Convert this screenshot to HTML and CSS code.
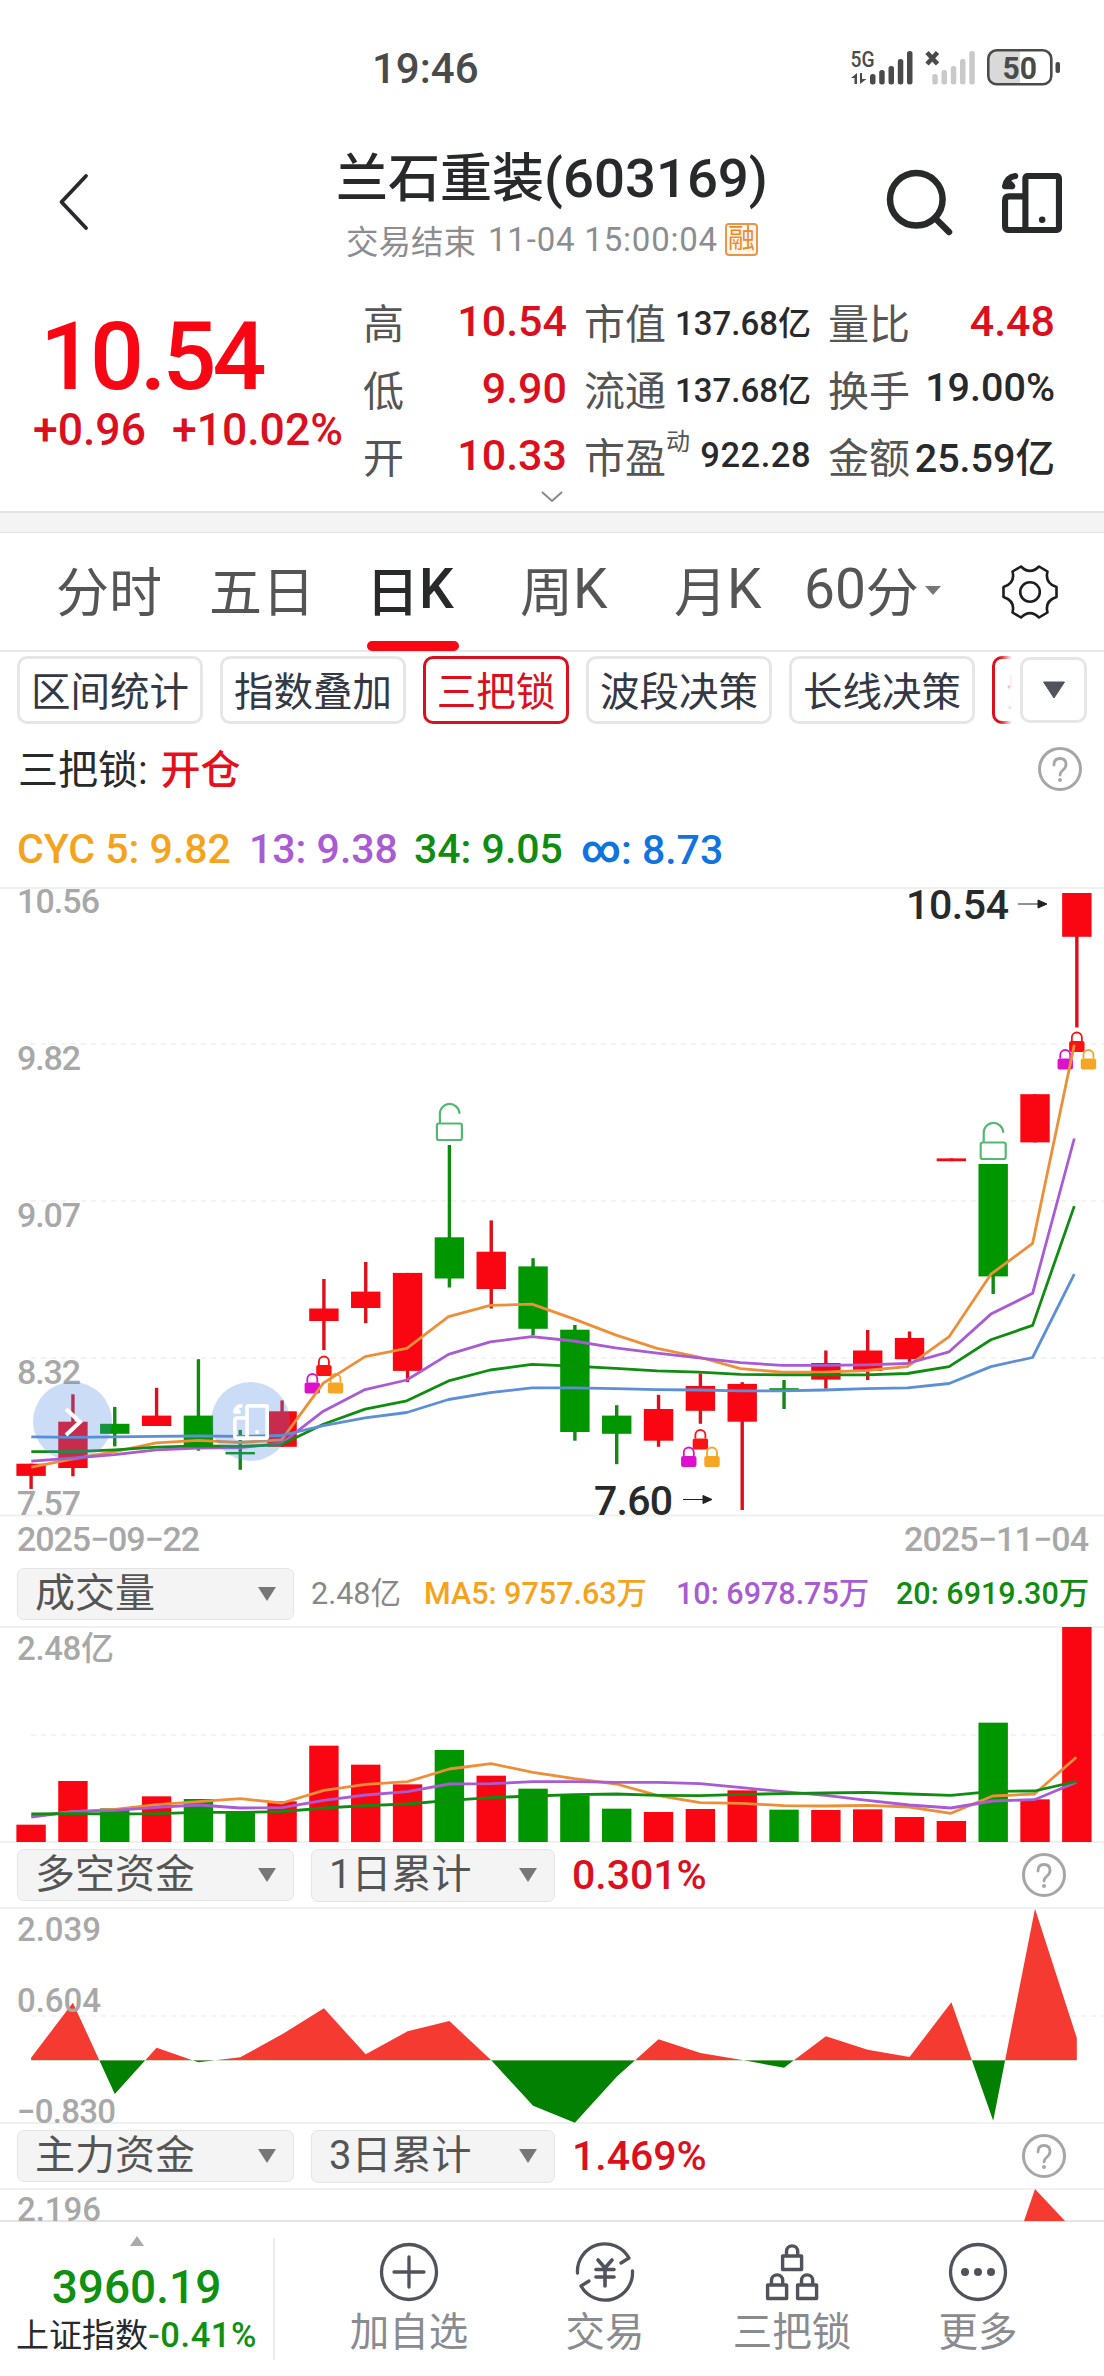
FILE: index.html
```html
<!DOCTYPE html>
<html lang="zh-CN">
<head>
<meta charset="utf-8">
<title>兰石重装(603169)</title>
<link rel="stylesheet" href="styles.css">
</head>
<body>
<svg width="0" height="0" class="defs">
  <defs>
    <g id="phone" fill="none" stroke="currentColor" stroke-width="6" stroke-linejoin="round" stroke-linecap="round">
      <rect x="23" y="3" width="33" height="53" rx="2"/>
      <path d="M22 23H7q-4 0-4 4v25q0 4 4 4h16"/>
      <circle cx="39.500" cy="46" r="3.200" fill="currentColor" stroke="none"/>
      <path d="M3 13q2-9 10-10M3 13h7M4 10q4-1 6 3" stroke-width="6"/>
    </g>
    <g id="help" fill="none" stroke="#a6a6a6" stroke-width="3">
      <circle cx="22" cy="22" r="20.500"/>
      <path d="M16 18q0-6.500 6-6.500t6 6q0 3-3 5.500t-3 5" stroke-width="2.800" stroke-linecap="round"/>
      <circle cx="22" cy="33" r="2" fill="#a6a6a6" stroke="none"/>
    </g>
    <g id="lock">
      <path d="M-5 10V6.500a5 5 0 0 1 10 0V10" fill="none" stroke="currentColor" stroke-width="1.800"/>
      <rect x="-7.700" y="10" width="15.400" height="11" rx="2" fill="currentColor"/>
    </g>
    <g id="locks">
      <use href="#lock" color="#fb1212"/>
      <use href="#lock" x="-11.600" y="17.500" color="#dd10cc"/>
      <use href="#lock" x="11.600" y="17.500" color="#f5a623"/>
    </g>
    <g id="unlock" fill="none" stroke="#53b873" stroke-width="2.200" stroke-linecap="round">
      <path d="M-9.500 19V10.500a9.700 9.700 0 0 1 19.500-1.500"/>
      <rect x="-12.500" y="19.500" width="25" height="16.500" rx="2"/>
    </g>
    <g id="footlock" fill="none" stroke="currentColor" stroke-width="3.400" stroke-linejoin="round">
      <rect x="1.600" y="12" width="19" height="13.500"/>
      <path d="M5.500 12V7.500a5.600 5.600 0 0 1 11.200 0V12"/>
    </g>
  </defs>
</svg>

<div class="status">
  <span class="clock">19:46</span>
  <svg width="220" height="44" viewBox="845 46 220 44" fill="#4a4a4a">
    <text x="850.500" y="66.500" font-size="22" textLength="24" lengthAdjust="spacingAndGlyphs" font-weight="500">5G</text>
    <path d="M857 84V73l-6 5h3.500v6zM860 73v11l6.500-5H862v-6z"/>
    <rect x="870" y="74" width="5.500" height="10.500" rx="2.500"/><rect x="879.200" y="70" width="5.500" height="14.500" rx="2.500"/><rect x="888.500" y="66" width="5.500" height="18.500" rx="2.500"/><rect x="897.800" y="59" width="5.500" height="25.500" rx="2.500"/><rect x="907" y="51" width="5.500" height="33.500" rx="2.500"/>
    <path d="M927 52.500l10.500 11.500m0-11.500L927 64" stroke="#4a4a4a" stroke-width="4.500"/>
    <g fill="#c9c9c9"><rect x="932.300" y="74" width="5.500" height="10.500" rx="2.500"/><rect x="941.500" y="70" width="5.500" height="14.500" rx="2.500"/><rect x="950.800" y="66" width="5.500" height="18.500" rx="2.500"/><rect x="960" y="59" width="5.500" height="25.500" rx="2.500"/><rect x="969.300" y="51" width="5.500" height="33.500" rx="2.500"/></g>
    <path d="M996 50h24v34h-24q-7 0-7-7V57q0-7 7-7z" fill="#d9d9d9"/>
    <rect x="988.300" y="50.300" width="63" height="34" rx="8.500" fill="none" stroke="#4a4a4a" stroke-width="2.600"/>
    <rect x="1055.500" y="62" width="4.500" height="11" rx="2"/>
    <text x="1002.500" y="79" font-size="32" font-weight="700" textLength="34.500" lengthAdjust="spacingAndGlyphs">50</text>
  </svg>
</div>

<header class="header">
  <svg class="back" width="32" height="60" viewBox="57 172 32 60"><path d="M86 176L61.500 202L86 228" fill="none" stroke="#28292b" stroke-width="3.800" stroke-linecap="round" stroke-linejoin="round"/></svg>
  <div class="heading">
    <h1>兰石重装<span class="num">(603169)</span></h1>
    <p>交易结束 <span class="num">11-04 15:00:04</span><b class="margin">融</b></p>
  </div>
  <svg class="search" width="68" height="68" viewBox="885 167 68 68" fill="none" stroke="#28292b" stroke-width="6.500"><circle cx="916.300" cy="199.300" r="26.300"/><path d="M935 218l14 14" stroke-linecap="round"/></svg>
  <svg class="phone" width="60" height="60" viewBox="0 0 59 59"><use href="#phone"/></svg>
</header>

<section class="quote">
  <div class="price">
    <strong>10.54</strong>
    <p><span>+0.96</span><span>+10.02%</span></p>
  </div>
  <dl class="c1"><div><dt>高</dt><dd class="up">10.54</dd></div><div><dt>低</dt><dd class="up">9.90</dd></div><div><dt>开</dt><dd class="up">10.33</dd></div></dl>
  <dl class="c2"><div><dt>市值</dt><dd>137.68<i>亿</i></dd></div><div><dt>流通</dt><dd>137.68<i>亿</i></dd></div><div><dt>市盈<sup>动</sup></dt><dd class="pe">922.28</dd></div></dl>
  <dl class="c3"><div><dt>量比</dt><dd class="up">4.48</dd></div><div><dt>换手</dt><dd>19.00%</dd></div><div><dt>金额</dt><dd>25.59<i>亿</i></dd></div></dl>
  <svg class="more" width="24" height="14" viewBox="0 0 24 14"><path d="M2 2l10 9L22 2" fill="none" stroke="#888" stroke-width="2"/></svg>
</section>

<nav class="tabs">
  <a class="t1">分时</a><a class="t2">五日</a><a class="t3 on">日<span class="num">K</span></a><a class="t4">周<span class="num">K</span></a><a class="t5">月<span class="num">K</span></a><a class="t6"><span class="num">60</span>分<svg width="16" height="9" viewBox="0 0 16 9"><path d="M0 0h16L8 9z" fill="#777"/></svg></a>
  <svg class="gear" width="58" height="56" viewBox="-29 -28 58 56" fill="none" stroke="#1c1d1f" stroke-width="2.600" stroke-linejoin="round"><path d="M-9-25.500Q0-16.500 9-25.500L17.500-20.500Q14.500-9 26.500-5V5Q14.500 9 17.500 20.500L9 25.500Q0 16.500-9 25.500L-17.500 20.500Q-14.500 9-26.500 5V-5Q-14.500-9-17.500-20.500Z"/><circle r="9.800"/></svg>
</nav>

<div class="chips">
  <span>区间统计</span><span>指数叠加</span><span class="on">三把锁</span><span>波段决策</span><span>长线决策</span>
  <div class="cut"><span class="on">紫</span></div>
  <button class="drop"><svg width="24" height="18" viewBox="0 0 24 18"><path d="M1.500 1h21L12 17z" fill="#50525c" stroke="#50525c" stroke-linejoin="round"/></svg></button>
</div>

<div class="signal"><span>三把锁: <em>开仓</em></span><svg width="44" height="44"><use href="#help"/></svg></div>
<div class="cyc"><span class="orange">CYC 5: 9.82</span><span class="purple">13: 9.38</span><span class="green">34: 9.05</span><span class="blue"><b>∞</b>: 8.73</span></div>

<div class="kline">
  <svg id="kline" width="1104" height="676" viewBox="0 886 1104 676"></svg>
  <button class="float expand"><svg width="20" height="34" viewBox="0 0 20 34"><path d="M3 4l14 13L3 30" fill="none" stroke="#fff" stroke-width="4"/></svg></button>
  <button class="float device"><svg width="36" height="36" viewBox="0 0 59 59"><use href="#phone"/></svg></button>
</div>

<div class="row volrow">
  <span class="select wide">成交量<svg width="18" height="14"><path d="M0 0h18L9 14z" fill="#777"/></svg></span>
  <span class="ma m0">2.48<i>亿</i></span><span class="ma m1 orange">MA5: 9757.63<i>万</i></span><span class="ma m2 purple">10: 6978.75<i>万</i></span><span class="ma m3 green">20: 6919.30<i>万</i></span>
</div>
<svg id="volume" width="1104" height="219" viewBox="0 1626 1104 219"></svg>

<div class="row fund">
  <span class="select wide">多空资金<svg width="18" height="14"><path d="M0 0h18L9 14z" fill="#777"/></svg></span>
  <span class="select"><span><span class="num">1</span>日累计</span><svg width="18" height="14"><path d="M0 0h18L9 14z" fill="#777"/></svg></span>
  <b>0.301%</b><svg class="q" width="44" height="44"><use href="#help"/></svg>
</div>
<svg id="flow" width="1104" height="219" viewBox="0 1907 1104 219"></svg>

<div class="row fund">
  <span class="select wide">主力资金<svg width="18" height="14"><path d="M0 0h18L9 14z" fill="#777"/></svg></span>
  <span class="select"><span><span class="num">3</span>日累计</span><svg width="18" height="14"><path d="M0 0h18L9 14z" fill="#777"/></svg></span>
  <b>1.469%</b><svg class="q" width="44" height="44"><use href="#help"/></svg>
</div>
<svg class="main" width="1104" height="32" viewBox="0 2188 1104 32">
  <path d="M0 2189H1104" stroke="#f0f0f0" stroke-width="2"/>
  <path d="M1035 2189L1065 2221H1024z" fill="#f53a32"/>
  <text x="17" y="2221" font-size="33" fill="#a8a8a8" textLength="84">2.196</text>
</svg>

<footer class="footer">
  <div class="index">
    <svg width="14" height="10"><path d="M7 0l7 10H0z" fill="#aaa"/></svg>
    <strong>3960.19</strong>
    <p>上证指数<span>-0.41%</span></p>
  </div>
  <div class="item i1"><svg width="60" height="60" viewBox="-30 -30 60 60" fill="none" stroke="currentColor" stroke-width="3.300" stroke-linecap="round"><circle r="27.500"/><path d="M-15 0h30M0-15v30"/></svg><span>加自选</span></div>
  <div class="item i2"><svg width="60" height="60" viewBox="-30 -30 60 60" fill="none" stroke="currentColor" stroke-width="3.300" stroke-linecap="round" stroke-linejoin="round"><path d="M-27.500 1A27.500 27.500 0 0 1 24-14l-8 5M27.500-1A27.500 27.500 0 0 1-24 14l8-5"/><path d="M-7-12L0-4l7-8M0-3v17M-9-2.500h18M-9 5h18" stroke-width="3.600"/></svg><span>交易</span></div>
  <div class="item i3"><svg width="60" height="60" viewBox="-30 -30 60 60"><use href="#footlock" x="-11" y="-28"/><use href="#footlock" x="-26" y="1"/><use href="#footlock" x="4" y="1"/></svg><span>三把锁</span></div>
  <div class="item i4"><svg width="60" height="60" viewBox="-30 -30 60 60" fill="none" stroke="currentColor" stroke-width="3.300"><circle r="27.500"/><g fill="currentColor" stroke="none"><circle cx="-13" r="4"/><circle r="4"/><circle cx="13" r="4"/></g></svg><span>更多</span></div>
</footer>
<script src="chart.js"></script>
</body>
</html>
```
FILE: styles.css
```css
* { box-sizing: border-box; }
body { margin: 0; width: 1104px; height: 2376px; overflow: hidden; background: #fff; color: #28292b; font-family: Roboto, "Noto Sans CJK SC", sans-serif; font-weight: 500; }
h1, p, dl, dd, dt { margin: 0; font-weight: 500; }
i, em { font-style: normal; }
b { font-weight: 500; }
svg { display: block; flex: none; overflow: visible; }
svg text { font-family: Roboto, "Noto Sans CJK SC", sans-serif; }
button { padding: 0; border: 0; background: none; }
.defs { position: absolute; }
.orange { color: #f5a31c; }
.purple { color: #a95bd3; }
.green { color: #108c10; }
.blue { color: #0f74e0; }

.status { display: flex; justify-content: space-between; align-items: center; height: 136px; padding: 0 39px 0 372px; }
.clock { font-size: 42px; color: #4a4a4a; }

.header { display: flex; height: 138px; align-items: flex-start; padding-left: 57px; }
.back { margin-top: 36px; }
.heading { width: 794px; padding: 7px 0 0 132px; text-align: center; margin-right: 2px; }
.heading h1 { font-size: 52px; line-height: 70px; white-space: nowrap; }
h1 .num { font-size: 54.500px; }
.heading p { display: flex; justify-content: center; align-items: center; height: 48px; gap: 12px; font-size: 32.500px; font-weight: 400; color: #8c8d90; }
.heading p .num { font-size: 33px; letter-spacing: .8px; }
.margin { width: 33px; height: 33px; margin-left: -5px; border: 2px solid #e8964a; border-radius: 4px; color: #ef8a2a; background: #fff8ec; font-size: 27px; line-height: 28px; font-weight: 400; }
.search { margin-top: 31px; }
.phone { margin: 37px 0 0 49px; }

.quote { position: relative; display: flex; height: 258px; padding-top: 13px; border-bottom: 19px solid #f4f4f4; box-shadow: inset 0 -2px #e2e2e2; }
.price { width: 363px; padding: 18px 0 0 36px; color: #f90614; }
.price strong { display: block; font-size: 95px; line-height: 104px; font-weight: 500; letter-spacing: -4px; padding-left: 4px; }
.price p { display: flex; gap: 26px; margin-top: -5px; line-height: 52px; font-size: 44.500px; color: #dc0f1e; white-space: nowrap; margin-left: -3px; }
.quote dl > div { display: flex; justify-content: space-between; align-items: center; height: 67px; white-space: nowrap; }
.quote dt { font-size: 41px; font-weight: 400; color: #555; }
.quote dd { font-size: 39.500px; }
.quote dd i { font-size: 1em; }
.quote .up { color: #dc0f1e; font-size: 43px; }
.c1 { width: 204px; }
.c2 { width: 227px; margin-left: 17px; }
.quote .c2 dd { font-size: 33px; }
.quote .c2 dd.pe { font-size: 34.500px; letter-spacing: .5px; }
.c2 dt { display: flex; }
.quote sup { font-size: 24px; line-height: 30px; margin-top: 2px; }
.c3 { width: 227px; margin-left: 17px; }
.more { position: absolute; left: 540px; top: 216px; }

.tabs { display: flex; align-items: center; height: 120px; padding-left: 56px; border-top: 1px solid #e2e2e2; border-bottom: 2px solid #e8e8e8; font-size: 53px; font-weight: 400; color: #555; white-space: nowrap; }
.tabs .num { font-size: 55px; }
.tabs a { position: relative; display: flex; align-items: center; height: 119px; padding-bottom: 6px; }
.t1, .t2 { width: 153px; }
.t3 { width: 158px; padding-left: 4px; }
.t4 { width: 154px; }
.t5 { width: 130px; }
.t6 { width: 197px; }
.t6 svg { margin: 4px 0 0 6px; }
.tabs .on { color: #28292b; font-weight: 500; }
.tabs .on::after { content: ""; position: absolute; left: 5px; bottom: 0; width: 92px; height: 10px; border-radius: 5px; background: #fa0714; }

.chips { display: flex; gap: 17px; height: 72px; padding: 4px 17px 0; font-size: 39.500px; color: #343844; }
.chips span { display: flex; flex: none; align-items: center; justify-content: center; width: 186px; height: 68px; padding-bottom: 3px; border: 3px solid #e6e6e6; border-radius: 10px; white-space: nowrap; font-weight: 400; }
.chips .on { width: 146px; border-color: #d9111e; color: #dc0f1e; }
.cut { width: 21px; overflow: hidden; -webkit-mask: linear-gradient(90deg, #000 40%, transparent); }
.cut .on { width: 146px; justify-content: flex-start; padding-left: 11px; }
.drop { display: flex; align-items: center; justify-content: center; flex: none; width: 67px; height: 66px; margin: 1px 0 0 -9px; border: 3px solid #e6e6e6; border-radius: 10px; }

.signal { display: flex; justify-content: space-between; align-items: center; height: 90px; padding: 0 22px 0 18px; font-size: 40px; font-weight: 400; white-space: pre; }
.signal span { padding-bottom: 5px; }
.signal em { color: #e60f1c; margin-left: 3px; font-weight: 500; }
.cyc { display: flex; height: 72px; line-height: 71px; padding-left: 17px; font-size: 41px; white-space: nowrap; }
.cyc span:nth-child(1) { width: 232px; }
.cyc span:nth-child(2) { width: 165px; }
.cyc span:nth-child(3) { width: 167px; }
.cyc b { font-size: 38px; font-weight: 700; vertical-align: 2px; }

.kline { position: relative; height: 676px; }
.float { position: absolute; top: 496px; display: flex; align-items: center; justify-content: center; width: 79px; height: 79px; border-radius: 50%; background: rgba(76, 138, 224, .29); color: #fff; }
.expand { left: 33px; }
.device { left: 211px; }

.row { display: flex; align-items: center; height: 64px; padding-left: 17px; white-space: nowrap; }
.select { display: flex; align-items: center; justify-content: space-between; width: 244px; height: 53px; padding: 0 17px; border: 1px solid #e4e4e4; border-radius: 7px; background: #f4f4f4; font-size: 40px; line-height: 52px; font-weight: 400; color: #555; }
.select.wide { width: 277px; height: 52px; margin-right: 17px; }
.ma { font-size: 30.500px; line-height: 62px; }
.m0 { width: 113px; color: #888; font-weight: 400; }
.m1 { width: 252px; }
.m2 { width: 220px; }
.fund { height: 62px; padding-bottom: 2px; }
.fund b { width: 450px; margin-left: 17px; font-size: 41px; color: #dc0f1e; }

.footer { display: flex; height: 156px; border-top: 2px solid #e4e4e4; background: #fff; color: #50525c; }
.index { display: flex; flex-direction: column; align-items: center; width: 275px; height: 122px; margin-top: 16px; border-right: 2px solid #eaeaea; white-space: nowrap; color: #28292b; }
.index strong { font-weight: 500; font-size: 46px; line-height: 54px; margin-top: 14px; color: #109010; }
.index svg { margin-top: -2px; }
.index p { font-size: 33px; line-height: 36px; margin-top: 3px; font-weight: 400; }
.index p span { font-size: 34.500px; letter-spacing: .6px; color: #109010; font-weight: 500; }
.item { display: flex; flex-direction: column; align-items: center; width: 196px; padding-top: 20px; }
.item span { margin-top: 3px; font-size: 39.500px; line-height: 56px; font-weight: 400; color: #8a8b90; }
.i1 { width: 200px; margin-left: 34px; }
.i2 { width: 192px; }
.i3 { width: 182px; }
.i4 { width: 190px; }
```
FILE: chart.js
```js
const NS = 'http://www.w3.org/2000/svg';
const RED = '#fa0612', GREEN = '#009600';
const colors = { orange: '#ed8f38', purple: '#a95bd3', green: '#108c10', blue: '#5c8fd6' };
const add = (svg, tag, attrs, text) => {
  const el = document.createElementNS(NS, tag);
  for (const k in attrs) el.setAttribute(k, attrs[k]);
  if (text) el.textContent = text;
  svg.append(el);
  return el;
};
const cx = i => 31.1 + i * 41.83;
const rule = (svg, y) => add(svg, 'path', { d: `M0 ${y}H1104`, stroke: '#f0f0f0', 'stroke-width': 2 });
const dashed = (svg, y) => add(svg, 'path', { d: `M31 ${y}H1104`, stroke: '#f0f0f0', 'stroke-width': 1.5, 'stroke-dasharray': '5 5' });
const label = (svg, x, y, w, text, extra) => add(svg, 'text', { x, y, textLength: w, 'font-size': 34, fill: '#a8a8a8', ...extra }, text);
const line = (svg, ys, step, map, color) => add(svg, 'polyline', {
  points: ys.map((v, i) => `${(31.3 + i * step).toFixed(1)},${map(v).toFixed(1)}`).join(' '),
  fill: 'none', stroke: color, 'stroke-width': 2.8, 'stroke-linejoin': 'round'
});

// Candles: direction, body top, body bottom, wick top, wick bottom
const candles = [
  ['r', 1463.7, 1475.9, 1463.7, 1488.9], ['r', 1421.7, 1468, 1394.3, 1476.3], ['g', 1423.8, 1433.8, 1406.9, 1446.4],
  ['r', 1415.6, 1426, 1387.8, 1426], ['g', 1415.6, 1447.2, 1359.2, 1450.7], ['g', 1452, 1454.4, 1429.9, 1469.8],
  ['r', 1411.3, 1446.8, 1400.4, 1446.8], ['r', 1308.5, 1321, 1279, 1350.1], ['r', 1291.6, 1308, 1262, 1323.2],
  ['r', 1272.9, 1370.9, 1272.9, 1382.2], ['g', 1237.3, 1278.5, 1145, 1287.6], ['r', 1251.7, 1289, 1220.4, 1308.5],
  ['g', 1266.4, 1328.8, 1258.2, 1335.4], ['g', 1329.7, 1432, 1325, 1440.7], ['g', 1415.6, 1433.8, 1405.2, 1464.2],
  ['r', 1409, 1440.7, 1394.8, 1446.8], ['r', 1386, 1410.8, 1373.5, 1423.8], ['r', 1383.9, 1421.7, 1382.2, 1510],
  ['g', 1388.2, 1390.2, 1380, 1409], ['r', 1363, 1379.6, 1350.5, 1388.7], ['r', 1350.5, 1370.9, 1330, 1380],
  ['r', 1338, 1359.2, 1331.5, 1362], ['r', 1158.4, 1161.2, 1158.4, 1161.2], ['g', 1164, 1276.4, 1164, 1294],
  ['r', 1094.2, 1142.4, 1094.2, 1142.4], ['r', 893, 936.8, 893, 1027.5]
];
const k = document.getElementById('kline');
rule(k, 888); rule(k, 1515.5);
[1044, 1201, 1358].forEach(y => dashed(k, y));
candles.forEach(([d, t, b, hi, lo], i) => {
  const c = d === 'r' ? RED : GREEN, x = cx(i);
  add(k, 'path', { d: `M${x} ${hi}V${lo}`, stroke: d === 'r' ? '#dc0f1a' : '#118a14', 'stroke-width': 3.4 });
  add(k, 'rect', { x: x - 14.7, y: t, width: 29.4, height: b - t, fill: c });
});
[[7, 1355], [16, 1428.5], [25, 1031]].forEach(([i, y]) => add(k, 'use', { href: '#locks', transform: `translate(${cx(i)} ${y})` }));
[[10, 1104], [23, 1123]].forEach(([i, y]) => add(k, 'use', { href: '#unlock', transform: `translate(${cx(i)} ${y})` }));
const averages = {
  orange: [1354,1335,1318,1298,1292,1297,1291,1160,1099,1080,1007,981,978,1012,1049,1080,1100,1127,1135,1135,1131,1122,1053,909,838,380],
  purple: [1340,1333,1325,1314,1310,1309,1299,1225,1175,1153,1094,1065,1053,1063,1079,1091,1102,1113,1119,1119,1118,1115,1088,1001,953,596],
  green: [1318,1318,1314,1308,1305,1306,1302,1255,1220,1201,1155,1130,1117,1121,1126,1132,1135,1140,1141,1141,1141,1138,1122,1060,1027,752],
  blue: [1284,1285,1284,1283,1282,1283,1281,1258,1240,1228,1198,1182,1171,1171,1173,1175,1176,1178,1178,1176,1173,1171,1161,1122,1101,909]
};
for (const c in averages) line(k, averages[c], 41.72, v => 880 + v * 0.43367, colors[c]);
label(k, 17, 913, 83, '10.56');
label(k, 17, 1070, 64, '9.82');
label(k, 17, 1227, 64, '9.07');
label(k, 17, 1383.5, 64, '8.32');
label(k, 17, 1514.5, 64, '7.57');
label(k, 17, 1551, 183, '2025−09−22');
label(k, 904, 1551, 185, '2025−11−04');
label(k, 906, 918.5, 103, '10.54', { 'font-size': 41, fill: '#28292b' });
label(k, 594, 1515, 79, '7.60', { 'font-size': 41, fill: '#28292b' });
[[1018, 904], [683, 1499.5]].forEach(([x, y]) => add(k, 'path', { d: `M${x} ${y}h20M${x + 20} ${y - 4}v8l9-4z`, fill: '#222', stroke: '#222', 'stroke-width': 1 }));

// Volume
const v = document.getElementById('volume');
const vy = n => 1540 + n / 3;
const volumes = [854,723,805,769,777,816,784,617,674,733,630,707,746,767,806,816,807,751,809,810,808,831,843,548,778,261];
rule(v, 1627); rule(v, 1842); dashed(v, 1735);
volumes.forEach((n, i) => {
  const up = candles[i][0] === 'r';
  add(v, 'rect', { x: cx(i) - 14.7, y: vy(n), width: 29.4, height: 1842 - vy(n), fill: up ? RED : GREEN });
});
const volumeAverages = {
  orange: [829,815,808,794,785,776,789,751,733,725,687,671,697,716,732,767,788,790,797,798,796,801,820,768,762,652],
  purple: [831,815,811,802,795,804,803,781,765,755,732,731,725,725,727,727,731,743,755,766,781,795,804,783,779,727],
  green: [822,821,822,821,817,817,815,804,797,792,781,773,768,764,762,766,767,763,761,759,757,762,766,754,753,724]
};
for (const c in volumeAverages) line(v, volumeAverages[c], 41.8, vy, colors[c]);
label(v, 17, 1660, 97, '2.48亿', { 'font-size': 33 });

// Net fund flow, red above zero and green below
const f = document.getElementById('flow');
const flow = [653,488,762,623,667,652,583,505,643,574,543,661,797,848,710,598,639,660,683,589,629,651,487,842,206,594];
rule(f, 1908); rule(f, 2123); dashed(f, 2016);
const area = `M${cx(0)} 2060.3` + flow.map((n, i) => `L${cx(i).toFixed(1)} ${(1840 + n / 3).toFixed(1)}`).join('') + `L${cx(25)} 2060.3z`;
[['above', 1900, 160.3, '#f53a32'], ['below', 2060.3, 70, '#028002']].forEach(([id, y, height, fill]) => {
  const clip = add(f, 'clipPath', { id });
  add(clip, 'rect', { x: 0, y, width: 1104, height });
  add(f, 'path', { d: area, fill, 'clip-path': `url(#${id})` });
});
label(f, 17, 1941, 84, '2.039', { 'font-size': 33 });
label(f, 17, 2012, 84, '0.604', { 'font-size': 33 });
label(f, 17, 2122.5, 99, '−0.830', { 'font-size': 33 });
```
